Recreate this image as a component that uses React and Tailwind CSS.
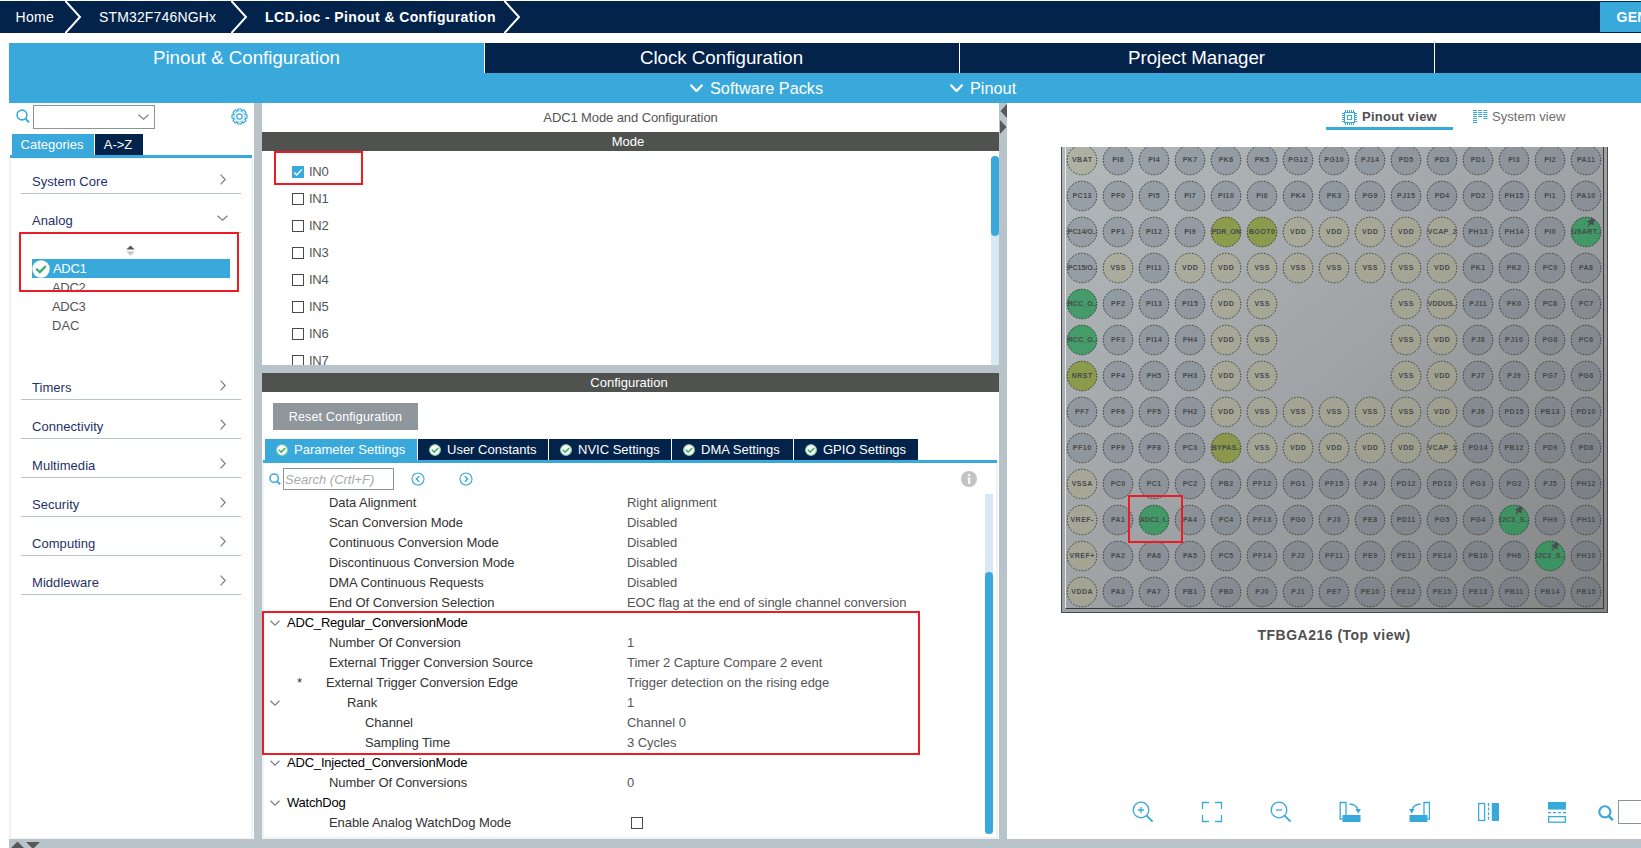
import React from "react";

const BLUE = "#39a9dc";

const Magnifier = ({ size = 14, stroke = 1.6 }) => (
  <svg width={size} height={size} viewBox="0 0 14 14" fill="none" stroke={BLUE} strokeWidth={stroke} className="shrink-0">
    <circle cx="6" cy="6" r="4.9" />
    <path d="M9.6 9.8 L13 13.2" strokeWidth={stroke + 0.4} />
  </svg>
);

const ChevronDown = ({ w = 10, h = 6, color = "#7d7d7d", stroke = 1.2 }) => (
  <svg width={w} height={h} viewBox={`0 0 ${w} ${h}`} fill="none" stroke={color} strokeWidth={stroke} className="shrink-0">
    <path d={`M0.5 0.7 L${w / 2} ${h - 0.9} L${w - 0.5} 0.7`} />
  </svg>
);

const ChevronRight = () => (
  <svg width="6" height="11" viewBox="0 0 6 11" fill="none" stroke="#7d7d7d" strokeWidth="1.2">
    <path d="M0.6 0.6 L5.2 5.5 L0.6 10.4" />
  </svg>
);

const Gear = () => {
  const teeth = [0, 45, 90, 135, 180, 225, 270, 315];
  return (
    <svg width="17" height="17" viewBox="-8.5 -8.5 17 17" fill="none" stroke={BLUE} strokeWidth="1.2">
      <circle r="2.7" />
      <circle r="5.6" strokeWidth="0.7" />
      {teeth.map((a) => (
        <path key={a} d="M-2.3 -5.5 L-1.6 -7.5 H1.6 L2.3 -5.5" transform={`rotate(${a})`} />
      ))}
    </svg>
  );
};

const OkBadge = ({ size = 12 }) => (
  <svg width={size} height={size} viewBox="0 0 12 12" fill="none" className="shrink-0">
    <circle cx="6" cy="6" r="5.8" fill="#fff" />
    {size < 15 && <circle cx="6" cy="6" r="5.3" stroke="#5cb87c" strokeWidth="0.8" />}
    <path d="M2.8 5.8 L5.2 8.1 L9.2 4.1" stroke="#3fae68" strokeWidth="1.5" />
  </svg>
);

const Crumb = () => (
  <svg width="18" height="32" viewBox="0 0 18 32" fill="none" stroke="#fff" strokeWidth="2" className="shrink-0">
    <path d="M0 -0.5 L15 16 L0 32.5" />
  </svg>
);

function TopBar() {
  return (
    <div className="mt-px flex h-8 items-center overflow-hidden bg-[#03234b] text-[14px] text-white">
      <span className="w-[65px] pl-[15.5px] tracking-[0.3px] whitespace-nowrap">Home</span>
      <Crumb />
      <span className="w-[148px] pl-[16px] tracking-[0.15px] whitespace-nowrap">STM32F746NGHx</span>
      <Crumb />
      <span className="w-[255px] pl-[16px] font-bold tracking-[0.39px] whitespace-nowrap">LCD.ioc - Pinout &amp; Configuration</span>
      <Crumb />
      <div className="ml-auto flex h-[30px] w-[41px] items-center overflow-hidden bg-[#39a9dc] pl-[16.5px] font-bold tracking-[0.3px] whitespace-nowrap">
        GENERATE CODE
      </div>
    </div>
  );
}

function MainTabs() {
  return (
    <div className="mt-[10px] ml-[9px] h-[60px]">
      <div className="flex h-[30px] text-[18.7px] text-white">
        <div className="flex w-[475px] items-center justify-center bg-[#39a9dc] pt-px">Pinout &amp; Configuration</div>
        <div className="flex w-[475px] items-center justify-center border-l border-white bg-[#03234b] pt-px pr-px">Clock Configuration</div>
        <div className="flex w-[475px] items-center justify-center border-l border-white bg-[#03234b] pt-px pr-px">Project Manager</div>
        <div className="flex-1 border-l border-white bg-[#03234b]" />
      </div>
      <div className="flex h-[30px] items-center bg-[#39a9dc] pl-[681px] text-[16.3px] text-white">
        <div className="flex w-[260px] items-center gap-[7px]">
          <ChevronDown w={13} h={8} color="#fff" stroke={2.2} />
          Software Packs
        </div>
        <div className="flex items-center gap-[7px]">
          <ChevronDown w={13} h={8} color="#fff" stroke={2.2} />
          Pinout
        </div>
      </div>
    </div>
  );
}

const Section = ({ label, open }) => (
  <div className="flex h-[39px] shrink-0 items-end justify-between border-b border-[#b8c4ca] pr-[15px] pb-[3px] pl-[11px] text-[#1f3166]">
    <span className="leading-4 tracking-[0.05px]">{label}</span>
    <span className={open ? "-mr-[2px] mb-[8px]" : "mb-[5px]"}>
      {open ? <ChevronDown w={11} h={6} /> : <ChevronRight />}
    </span>
  </div>
);

function Sidebar() {
  return (
    <div className="flex h-[736px] w-[245px] flex-col">
      <div className="flex h-[31px] items-start pl-[7px]">
        <span className="mt-[6px]"><Magnifier size={14} /></span>
        <div className="mt-[2px] ml-[3px] flex h-[24px] w-[122px] items-center justify-end border border-[#8d939b] pr-[5px]">
          <ChevronDown w={11} h={6} />
        </div>
        <span className="mt-[5px] mr-[6px] ml-auto"><Gear /></span>
      </div>
      <div className="flex h-[21px] gap-px pl-[3px] text-white">
        <div className="flex w-[82px] items-center justify-center bg-[#39a9dc] pr-[2px]">Categories</div>
        <div className="flex w-[48px] items-center justify-center bg-[#03234b] pr-[2px]">A-&gt;Z</div>
      </div>
      <div className="ml-px h-[3px] w-[242px] shrink-0 bg-[#39a9dc]" />
      <div className="flex min-h-0 w-[244px] flex-1 flex-col border-x-2 border-t border-b border-[#f0f2f5] pr-[10px] pl-[10px]">
        <div className="-mt-[4px]" />
        <Section label="System Core" />
        <Section label="Analog" open />
        <div className="flex h-[128px] shrink-0 flex-col pl-[11px] text-[#555]">
          <div className="flex h-[26px] items-center pt-[9px] pl-[94px]">
            <svg width="9" height="11" viewBox="0 0 9 11">
              <path d="M4.5 0.5 L8.7 4.5 H0.3 Z" fill="#585858" />
              <path d="M4.5 10.5 L8.7 6.5 H0.3 Z" fill="#c4c4c4" />
            </svg>
          </div>
          <div className="flex h-[19px] w-[198px] items-center bg-[#39a9dc] text-white">
            <OkBadge size={18} />
            <span className="ml-[3px] tracking-[-0.3px]">ADC1</span>
          </div>
          <div className="flex h-[19px] items-center pl-[20px] tracking-[-0.3px]">ADC2</div>
          <div className="flex h-[19px] items-center pl-[20px] tracking-[-0.3px]">ADC3</div>
          <div className="flex h-[19px] items-center pl-[20px]">DAC</div>
        </div>
        <Section label="Timers" />
        <Section label="Connectivity" />
        <Section label="Multimedia" />
        <Section label="Security" />
        <Section label="Computing" />
        <Section label="Middleware" />
      </div>
    </div>
  );
}

const Check = ({ on }) =>
  on ? (
    <svg width="12" height="12" viewBox="0 0 12 12" className="shrink-0">
      <rect width="12" height="12" fill={BLUE} />
      <path d="M2.2 6.4 L4.8 9 L9.8 3.4" fill="none" stroke="#fff" strokeWidth="1.4" />
    </svg>
  ) : (
    <span className="block h-[12px] w-[12px] shrink-0 border border-[#4a4a4a] bg-white" />
  );

function ModePanel() {
  return (
    <div className="flex h-[262px] shrink-0 flex-col">
      <div className="flex h-[29px] items-center justify-center tracking-[-0.1px] text-[#555]">ADC1 Mode and Configuration</div>
      <div className="flex h-[19px] items-center justify-center bg-[#505250] pr-[5px] text-white">Mode</div>
      <div className="flex h-[214px] overflow-hidden">
        <div className="flex flex-1 flex-col pt-[7px] pl-[30px]">
          {[0, 1, 2, 3, 4, 5, 6, 7].map((n) => (
            <div key={n} className="flex h-[27px] shrink-0 items-start gap-[5px] text-[#555]">
              <span className="mt-[8px]"><Check on={n === 0} /></span>
              <span className="mt-[6px] leading-4 tracking-[-0.3px]">IN{n}</span>
            </div>
          ))}
        </div>
        <div className="mt-[5px] w-[8px] rounded-t bg-[#d9e8f5]">
          <div className="h-[80px] rounded bg-[#39a9dc]" />
        </div>
      </div>
    </div>
  );
}

const configTabs = [
  { label: "Parameter Settings", cls: "w-[152px] bg-[#39a9dc]" },
  { label: "User Constants", cls: "w-[130px] bg-[#03234b]" },
  { label: "NVIC Settings", cls: "w-[122px] bg-[#03234b]" },
  { label: "DMA Settings", cls: "w-[121px] bg-[#03234b]" },
  { label: "GPIO Settings", cls: "w-[124px] bg-[#03234b]" },
];

const params = [
  ["item", "Data Alignment", "Right alignment"],
  ["item", "Scan Conversion Mode", "Disabled"],
  ["item", "Continuous Conversion Mode", "Disabled"],
  ["item", "Discontinuous Conversion Mode", "Disabled"],
  ["item", "DMA Continuous Requests", "Disabled"],
  ["item", "End Of Conversion Selection", "EOC flag at the end of single channel conversion"],
  ["group", "ADC_Regular_ConversionMode", ""],
  ["item", "Number Of Conversion", "1"],
  ["item", "External Trigger Conversion Source", "Timer 2 Capture Compare 2 event"],
  ["star", "External Trigger Conversion Edge", "Trigger detection on the rising edge"],
  ["rank", "Rank", "1"],
  ["sub", "Channel", "Channel 0"],
  ["sub", "Sampling Time", "3 Cycles"],
  ["group", "ADC_Injected_ConversionMode", ""],
  ["item", "Number Of Conversions", "0"],
  ["group", "WatchDog", ""],
  ["item", "Enable Analog WatchDog Mode", "checkbox"],
];

const indent = {
  item: "pl-[59px] tracking-[-0.06px] text-[#333]",
  group: "pl-[17px] tracking-[-0.2px] text-black",
  star: "pl-[56px] tracking-[-0.1px] text-[#333]",
  rank: "pl-[77px] tracking-[-0.07px] text-[#333]",
  sub: "pl-[95px] tracking-[-0.07px] text-[#333]",
};

function ParamRow({ kind, name, value }) {
  return (
    <div className="flex h-[20px] shrink-0 items-center whitespace-nowrap">
      <div className="flex w-[359px] items-center">
        <span className="flex w-0 shrink-0 overflow-visible">
          {(kind === "group" || kind === "rank") && <ChevronDown w={10} h={6} />}
          {kind === "star" && <span className="pl-[27px] text-[#333]">*</span>}
        </span>
        <span className={indent[kind]}>{name}</span>
      </div>
      {value === "checkbox" ? (
        <span className="ml-[2px]"><Check /></span>
      ) : (
        <span className="-ml-[2px] tracking-[-0.05px] text-[#555]">{value}</span>
      )}
    </div>
  );
}

const CircleArrow = ({ flip }) => (
  <svg width="14" height="14" viewBox="-7 -7 14 14" fill="none" stroke={BLUE} strokeWidth="1.1">
    <circle r="6" />
    <path d={flip ? "M-1.2 -2.8 L1.6 0 L-1.2 2.8" : "M1.2 -2.8 L-1.6 0 L1.2 2.8"} strokeWidth="1.4" />
  </svg>
);

function ConfigPanel() {
  return (
    <div className="flex h-[466px] flex-col">
      <div className="flex h-[19px] shrink-0 items-center justify-center bg-[#505250] pr-[3px] text-white">Configuration</div>
      <div className="mt-[11px] ml-[11px] flex h-[27px] w-[145px] shrink-0 items-center justify-center bg-[#8f979d] pt-px text-[12.5px] tracking-[0.15px] text-white">
        Reset Configuration
      </div>
      <div className="mt-[9px] flex h-[21px] shrink-0 gap-px pl-[3px] text-white">
        {configTabs.map((t) => (
          <div key={t.label} className={`flex items-center gap-[6px] pl-[11px] whitespace-nowrap ${t.cls}`}>
            <OkBadge />
            {t.label}
          </div>
        ))}
      </div>
      <div className="ml-px h-[3px] w-[734px] shrink-0 bg-[#39a9dc]" />
      <div className="flex min-h-0 w-[736px] flex-1 flex-col border-x-2 border-b-2 border-[#f0f2f5]">
        <div className="flex h-[30px] shrink-0 items-start pl-[5px]">
          <span className="mt-[10px]"><Magnifier size={12} stroke={1.8} /></span>
          <div className="mt-[5px] ml-[2px] flex h-[22px] w-[111px] items-center border border-[#8d939b] pt-px pl-[1px] text-[#aaa] italic">
            Search (Crtl+F)
          </div>
          <span className="mt-[9px] ml-[17px]"><CircleArrow /></span>
          <span className="mt-[9px] ml-[34px]"><CircleArrow flip /></span>
          <svg width="16" height="16" viewBox="0 0 16 16" className="mt-[8px] mr-[19px] ml-auto">
            <circle cx="8" cy="8" r="8" fill="#c3c3c3" />
            <path d="M7 3.2 h2.2 v1.8 h-2.2 z M6.4 6.4 h2.8 v6.6 h-2 v-5.6 h-0.8 z" fill="#fff" />
          </svg>
        </div>
        <div className="flex min-h-0 flex-1">
          <div className="flex flex-1 flex-col pl-[6px]">
            {params.map(([kind, name, value], i) => (
              <ParamRow key={i} kind={kind} name={name} value={value} />
            ))}
          </div>
          <div className="mt-px mr-[3px] flex h-[340px] w-[8px] flex-col bg-[#d9e8f5]">
            <div className="mt-[78px] flex-1 rounded bg-[#39a9dc]" />
          </div>
        </div>
      </div>
    </div>
  );
}

const pinRows = [
  "VBAT PI8 PI4 PK7 PK6 PK5 PG12 PG10 PJ14 PD5 PD3 PD1 PI3 PI2 PA11",
  "PC13 PF0 PI5 PI7 PI10 PI6 PK4 PK3 PG9 PJ15 PD4 PD2 PH15 PI1 PA10",
  "PC14/O.. PF1 PI12 PI9 PDR_ON BOOT0 VDD VDD VDD VDD VCAP_2 PH13 PH14 PI0 USART..",
  "PC15/O.. VSS PI11 VDD VDD VSS VSS VSS VSS VSS VDD PK1 PK2 PC9 PA8",
  "RCC_O.. PF2 PI13 PI15 VDD VSS - - - VSS VDDUS.. PJ11 PK0 PC8 PC7",
  "RCC_O.. PF3 PI14 PH4 VDD VSS - - - VSS VDD PJ8 PJ10 PG8 PC6",
  "NRST PF4 PH5 PH3 VDD VSS - - - VSS VDD PJ7 PJ9 PG7 PG6",
  "PF7 PF6 PF5 PH2 VDD VSS VSS VSS VSS VSS VDD PJ6 PD15 PB13 PD10",
  "PF10 PF9 PF8 PC3 BYPAS.. VSS VDD VDD VDD VDD VCAP_1 PD14 PB12 PD9 PD8",
  "VSSA PC0 PC1 PC2 PB2 PF12 PG1 PF15 PJ4 PD12 PD13 PG3 PG2 PJ5 PH12",
  "VREF- PA1 ADC1_I.. PA4 PC4 PF13 PG0 PJ3 PE8 PD11 PG5 PG4 I2C3_S.. PH9 PH11",
  "VREF+ PA2 PA6 PA5 PC5 PF14 PJ2 PF11 PE9 PE11 PE14 PB10 PH6 I2C3_S.. PH10",
  "VDDA PA3 PA7 PB1 PB0 PJ0 PJ1 PE7 PE10 PE12 PE15 PE13 PB11 PB14 PB15",
].map((r) => r.split(" "));

const pinFill = (name) => {
  if (/^(RCC|ADC1|USART|I2C3)/.test(name)) return "rgba(38,148,84,0.76)";
  if (/^(PDR|BOOT|NRST|BYPAS)/.test(name)) return "rgba(132,148,44,0.75)";
  if (/^V/.test(name)) return "rgba(170,166,120,0.38)";
  return "rgba(84,100,120,0.27)";
};

const pinned = /^(USART|I2C3)/;

const Pin = ({ name }) =>
  name === "-" ? (
    <span />
  ) : (
    <svg width="32" height="32" viewBox="-16 -16 32 32" className="block">
      <circle r="15" fill={pinFill(name)} />
      <circle r="14.8" fill="none" stroke="#34383b" strokeWidth="1" strokeDasharray="1.55 1.55" />
      <text
        textAnchor="middle"
        x="0.2"
        y="2.3"
        fontSize="7"
        fontWeight="bold"
        letterSpacing={name.length > 5 ? "0" : "0.5"}
        textLength={name.length > 5 ? 29 : undefined}
        fill="#464a4d"
      >
        {name}
      </text>
      {pinned.test(name) && (
        <path d="M5 -15 L9.5 -11.5 L7.6 -10.2 L7.6 -6.6 L5 -8 L1.2 -4.4 L3.2 -9 L0.8 -10.4 L4.4 -12 Z" fill="#4a4e50" />
      )}
    </svg>
  );

function Chip() {
  return (
    <div className="h-[466px] w-[547px] border-r border-b border-l border-[#484a4c] bg-linear-to-br from-[#b2b9bb] via-[#a0a3a5] to-[#828484] pr-[3px] pb-[3px] pl-[3px]">
      <div className="h-[462px] overflow-hidden border-r border-b border-l border-r-[#36383a] border-b-[#36383a] border-l-[#e9ecec]">
        <div className="-mt-[5px] -ml-[2px] grid grid-cols-[repeat(15,36px)] grid-rows-[repeat(13,36px)] place-items-center">
          {pinRows.flat().map((n, i) => (
            <Pin key={i} name={n} />
          ))}
        </div>
      </div>
    </div>
  );
}

const ChipIcon = () => (
  <svg width="15" height="15" viewBox="0 0 15 15" fill="none" stroke={BLUE} shapeRendering="crispEdges" className="shrink-0">
    <rect x="2.5" y="2.5" width="10" height="10" />
    <rect x="5.5" y="5.5" width="4" height="4" />
    {[3, 5, 7, 9, 11].map((p) => (
      <path key={p} d={`M${p + 0.5} 0 V2 M${p + 0.5} 13 V15 M0 ${p + 0.5} H2 M13 ${p + 0.5} H15`} />
    ))}
  </svg>
);

const SystemIcon = () => (
  <svg width="15" height="14" viewBox="0 0 15 14" stroke={BLUE} strokeWidth="1" className="shrink-0">
    {[0, 2, 4, 6, 8, 10, 12].map((y) => (
      <path key={y} d={`M0 ${y + 0.5} H4${y < 8 ? ` M5.2 ${y + 0.5} H9.2` : ""}${y < 10 ? ` M10.4 ${y + 0.5} H14.4` : ""}`} />
    ))}
  </svg>
);

const Tool = ({ children }) => (
  <svg width="22" height="22" viewBox="0 0 22 22" fill="none" stroke={BLUE} strokeWidth="1.3" className="mr-[47px] shrink-0">
    {children}
  </svg>
);

function Toolbar() {
  return (
    <div className="flex h-[24px] items-center pl-[125px]">
      <Tool>
        <circle cx="9" cy="9" r="7.8" />
        <path d="M14.6 14.6 L20.6 20.6" strokeWidth="1.8" />
        <path d="M6 9 H12 M9 6 V12" />
      </Tool>
      <Tool>
        <path d="M1.5 8 V1.5 H8 M14 1.5 H20.5 V8 M20.5 14 V20.5 H14 M8 20.5 H1.5 V14" />
      </Tool>
      <Tool>
        <circle cx="9" cy="9" r="7.8" />
        <path d="M14.6 14.6 L20.6 20.6" strokeWidth="1.8" />
        <path d="M6 9 H12" />
      </Tool>
      <Tool>
        <path d="M3.5 18 H1.2 V1.5 H7 V14" />
        <rect x="3.5" y="14" width="18" height="7" fill={BLUE} stroke="none" />
        <path d="M10.5 3 Q17.5 3.5 19 9" />
        <path d="M16.4 8 H22 L19.3 12.6 Z" fill={BLUE} stroke="none" />
      </Tool>
      <Tool>
        <path d="M19.5 18 H21.4 V1.5 H16 V14" />
        <rect x="1.5" y="14" width="18" height="7" fill={BLUE} stroke="none" />
        <path d="M12.5 3 Q5.5 3.5 4 9" />
        <path d="M6.6 8 H1 L3.7 12.6 Z" fill={BLUE} stroke="none" />
      </Tool>
      <Tool>
        <rect x="1.6" y="2.5" width="6" height="17" />
        <path d="M11.5 2 V20" strokeDasharray="3 1.6" />
        <rect x="14.8" y="2" width="7.2" height="18" fill={BLUE} stroke="none" />
      </Tool>
      <Tool>
        <rect x="2" y="1" width="18" height="7.6" fill={BLUE} stroke="none" />
        <path d="M2 11.7 H20" strokeDasharray="3 2" />
        <rect x="2.6" y="15.6" width="16.8" height="5.6" />
      </Tool>
      <span className="-ml-[17px] flex w-[20px] shrink-0 pt-px">
        <Magnifier size={16} stroke={1.9} />
      </span>
      <div className="h-[24px] w-[60px] shrink-0 border border-[#8d939b] bg-white" />
    </div>
  );
}

function PinoutPanel() {
  return (
    <div className="flex h-[736px] w-[634px] flex-col overflow-hidden">
      <div className="flex h-[27px] shrink-0 pl-[319px]">
        <div className="flex w-[127px] items-center justify-center gap-[5px] border-b-[3px] border-[#39a9dc] pt-[4px] font-bold tracking-[0.25px] text-[#505050]">
          <ChipIcon />
          Pinout view
        </div>
        <div className="ml-[20px] flex items-center gap-[4px] pt-px text-[#6d6d6d]">
          <SystemIcon />
          <span className="tracking-[0.05px]">System view</span>
        </div>
      </div>
      <div className="mt-[17px] ml-[54px]">
        <Chip />
        <div className="mt-[13px] flex h-[18px] w-[547px] items-center justify-center pr-px text-[14px] font-bold tracking-[0.5px] text-[#505050]">
          TFBGA216 (Top view)
        </div>
      </div>
      <div className="mt-auto mb-[15px]">
        <Toolbar />
      </div>
    </div>
  );
}

const SplitV = ({ arrows }) => (
  <div className="h-[736px] w-[8px] shrink-0 bg-[#b8c4ca]">
    {arrows && (
      <svg width="8" height="32" viewBox="0 0 8 32" fill="#585858">
        <path d="M8 1 V15 L1.5 8 Z" />
        <path d="M1 17 V31 L7.5 24 Z" />
      </svg>
    )}
  </div>
);

export default function App() {
  return (
    <div className="relative h-[848px] w-[1641px] overflow-hidden bg-white font-['Liberation_Sans',Arial,sans-serif] text-[13px]">
      <TopBar />
      <MainTabs />
      <div className="ml-[9px] flex">
        <Sidebar />
        <SplitV />
        <div className="flex h-[736px] w-[737px] shrink-0 flex-col">
          <ModePanel />
          <div className="h-[8px] shrink-0 bg-[#b8c4ca]" />
          <ConfigPanel />
        </div>
        <SplitV arrows />
        <PinoutPanel />
      </div>
      <div className="ml-[9px] h-[9px] bg-[#b8c4ca] pl-[2px]">
        <svg width="32" height="9" viewBox="0 0 32 9" fill="#585858">
          <path d="M0 9 L6.5 2.5 L13 9 Z" />
          <path d="M15 3 H29 L22 10 Z" />
        </svg>
      </div>
      <div className="absolute top-[232px] left-[19px] h-[60px] w-[220px] border-2 border-[#ed1c24]" />
      <div className="absolute top-[151px] left-[274px] h-[34px] w-[89px] border-2 border-[#ed1c24]" />
      <div className="absolute top-[611px] left-[262px] h-[144px] w-[658px] border-2 border-[#ed1c24]" />
      <div className="absolute top-[495px] left-[1128px] h-[48px] w-[55px] border-2 border-[#ed1c24]" />
    </div>
  );
}
